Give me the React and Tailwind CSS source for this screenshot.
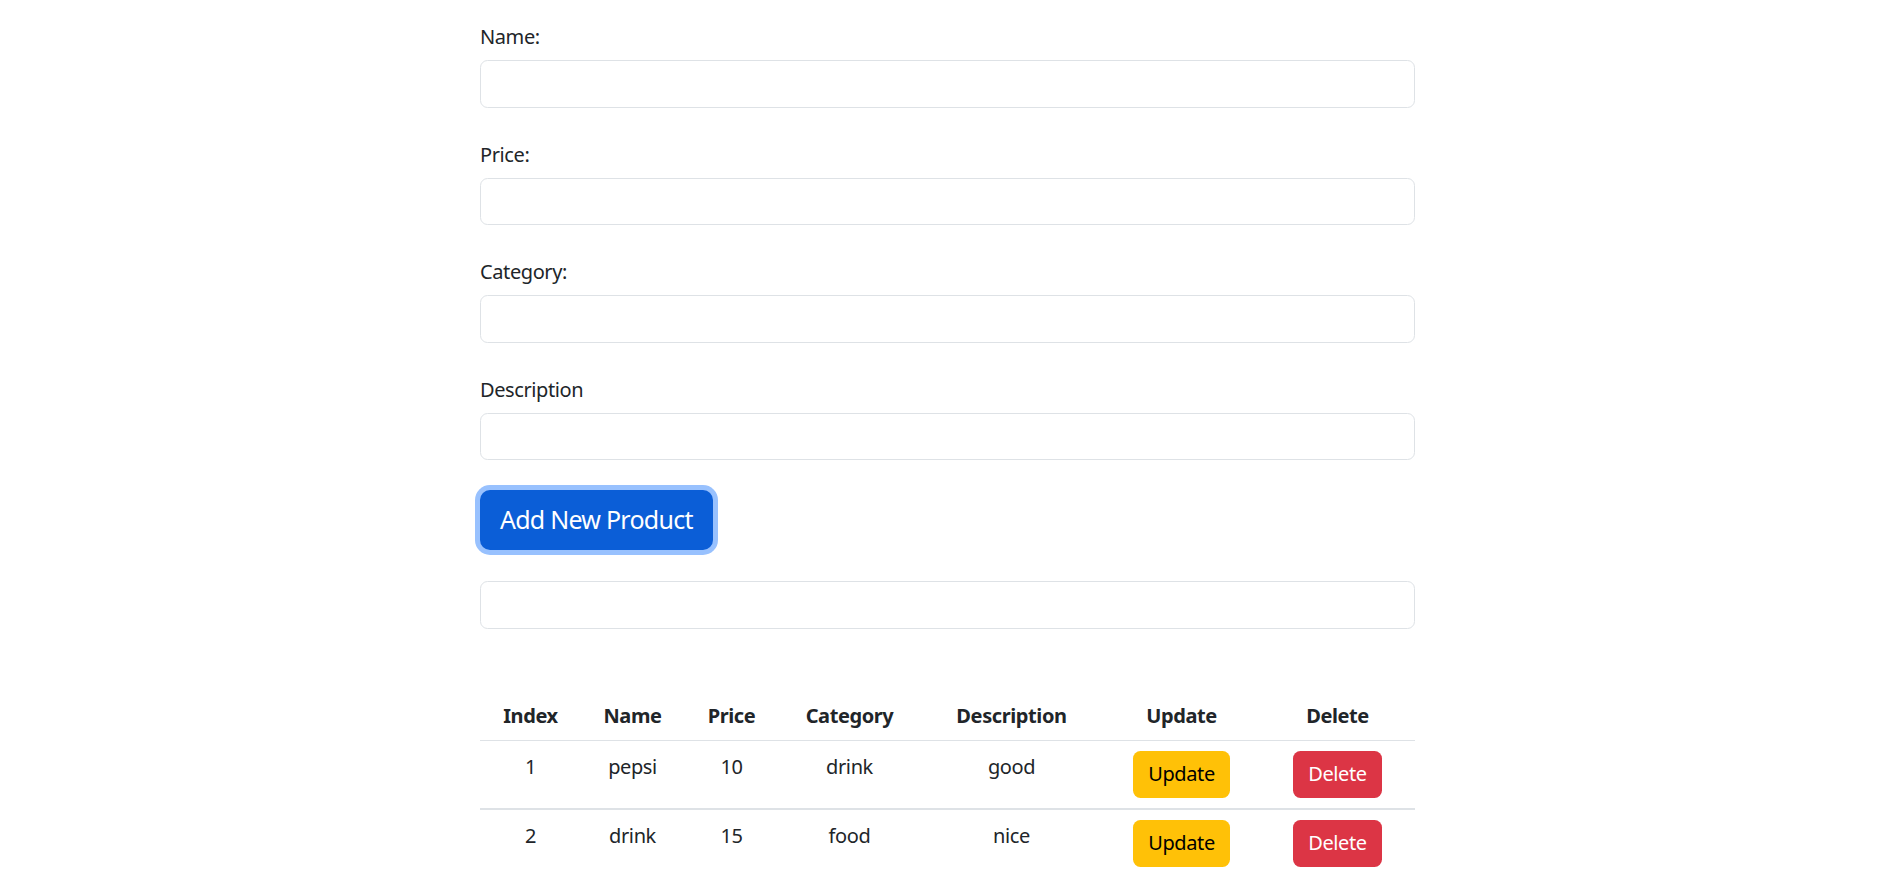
const products = [
    { name: "pepsi", price: 10, category: "drink", description: "good" },
    { name: "drink", price: 15, category: "food", description: "nice" },
];

const fields = ["Name:", "Price:", "Category:", "Description"];

const inputClass =
    "block w-full h-[47.5px] px-[15px] rounded-[7.5px] border border-[#dee2e6] bg-white text-[20px] text-[#212529] outline-none";

const colWidths = ["w-[101px]", "w-[103px]", "w-[95px]", "w-[141px]", "w-[183px]", "w-[157px]", "w-[155px]"];
const headers = ["Index", "Name", "Price", "Category", "Description", "Update", "Delete"];

export default function App() {
    return (
        <div
            className="min-h-screen bg-white text-[#212529] text-[20px] leading-[30px] tracking-[-0.02em]"
            style={{ fontFamily: '"Segoe UI", "Noto Sans", "Open Sans", sans-serif' }}
        >
            <div className="w-[935px] pt-[20px] ml-[480px]">
                {fields.map((label) => (
                    <div key={label} className="mb-[30px]">
                        <label className="block pt-[2px] mb-[8px]">{label}</label>
                        <input type="text" className={inputClass} />
                    </div>
                ))}

                <button
                    type="button"
                    className="block h-[60px] px-[20px] rounded-[10px] bg-[#0b5ed7] text-white text-[25px] leading-[37.5px] tracking-[-0.03em] ring-[5px] ring-[#98c1fe] mb-[31px]"
                >
                    Add New Product
                </button>

                <input type="text" className={inputClass} />

                {/* product list */}
                <table className="w-full mt-[61px] table-fixed border-collapse text-center">
                    <thead>
                        <tr className="border-b border-[#dee2e6]">
                            {headers.map((h, i) => (
                                <th key={h} className={`${colWidths[i]} pt-[11px] pb-[9px] font-bold align-top`}>
                                    {h}
                                </th>
                            ))}
                        </tr>
                    </thead>
                    <tbody>
                        {products.map((p, i) => (
                            <tr key={i} className="border-b-2 border-[#dee2e6]">
                                <td className="pt-[11px] pb-[9px] align-top">{i + 1}</td>
                                <td className="pt-[11px] pb-[9px] align-top">{p.name}</td>
                                <td className="pt-[11px] pb-[9px] align-top">{p.price}</td>
                                <td className="pt-[11px] pb-[9px] align-top">{p.category}</td>
                                <td className="pt-[11px] pb-[9px] align-top">{p.description}</td>
                                <td className="py-[10px] align-top">
                                    <button className="h-[47px] px-[15px] rounded-[7.5px] bg-[#ffc107] text-black">
                                        Update
                                    </button>
                                </td>
                                <td className="py-[10px] align-top">
                                    <button className="h-[47px] px-[15px] rounded-[7.5px] bg-[#dc3545] text-white">
                                        Delete
                                    </button>
                                </td>
                            </tr>
                        ))}
                    </tbody>
                </table>
            </div>
        </div>
    );
}
